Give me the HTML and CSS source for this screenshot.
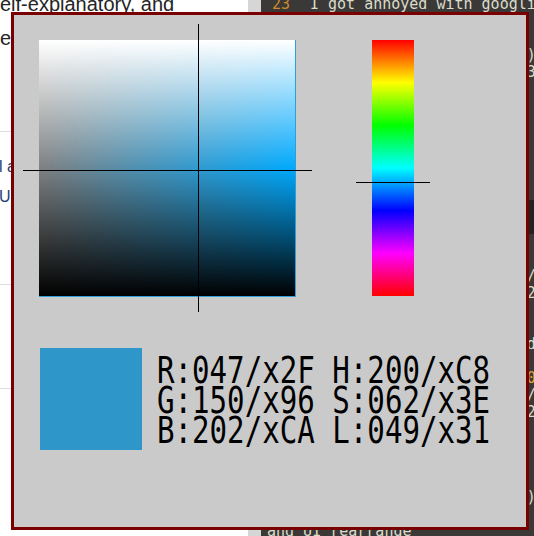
FILE: index.html
```html
<!DOCTYPE html>
<html>
<head>
<meta charset="utf-8">
<link rel="stylesheet" href="styles.css">
</head>
<body>
<div class="page">
  <div class="left-pane">
    <p class="intro">elf-explanatory, and<br>easy to use.</p>
    <div class="rule rule-a"></div>
    <div class="links">
      <div>l and theme</div>
      <div>UI tweaks</div>
    </div>
    <div class="rule rule-b"></div>
    <div class="rule rule-c"></div>
  </div>
  <div class="scroll"></div>
  <div class="editor">
    <div class="ln"><span class="num">23</span><span>I got annoyed with googling for colour codes</span></div>
    <div class="ln"><span class="num"></span><span>so...</span></div>
    <div class="ln"><span class="num"></span><span>TODO:</span></div>
    <div class="ln"><span class="num"></span><span>and made this (pure SDL2) thing</span></div>
    <div class="ln"><span class="num"></span><span>- [x] RGB/HSL readouts v3</span></div>
    <div class="ln"><span class="num"></span><span></span></div>
    <div class="ln"><span class="num"></span><span></span></div>
    <div class="ln"><span class="num"></span><span></span></div>
    <div class="ln"><span class="num"></span><span></span></div>
    <div class="ln"><span class="num"></span><span></span></div>
    <div class="ln"><span class="num"></span><span></span></div>
    <div class="ln"><span class="num"></span><span></span></div>
    <div class="ln hl"><span class="num"></span><span></span></div>
    <div class="ln hl"><span class="num"></span><span></span></div>
    <div class="ln"><span class="num"></span><span></span></div>
    <div class="ln"><span class="num"></span><span></span></div>
    <div class="ln"><span class="num"></span><span>- [ ] copy value as hex / rgb</span></div>
    <div class="ln"><span class="num"></span><span>- [ ] palette file (v1/v2)</span></div>
    <div class="ln"><span class="num"></span><span></span></div>
    <div class="ln"><span class="num"></span><span></span></div>
    <div class="ln"><span class="num"></span><span>- [ ] keep windows pinned</span></div>
    <div class="ln"><span class="num"></span><span></span></div>
    <div class="ln"><span class="num"></span><span>- [ ] default hue value <span class="lit">0</span></span></div>
    <div class="ln"><span class="num"></span><span>- [ ] pick from display / X11</span></div>
    <div class="ln"><span class="num"></span><span>- [ ] also test with SDL2</span></div>
    <div class="ln"><span class="num"></span><span></span></div>
    <div class="ln"><span class="num"></span><span></span></div>
    <div class="ln"><span class="num"></span><span></span></div>
    <div class="ln"><span class="num"></span><span></span></div>
    <div class="ln"><span class="num"></span><span>- [ ] few deps (only SDL)</span></div>
    <div class="ln"><span class="num"></span><span></span></div>
    <div class="ln wrap">and UI rearrange</div>
  </div>
</div>

<div class="dialog">
  <div class="top-row">
    <div class="sv">
      <div class="sv-light"></div>
      <div class="cross-v"></div>
      <div class="cross-h"></div>
    </div>
    <div class="hue">
      <div class="hue-mark"></div>
    </div>
  </div>
  <div class="bottom-row">
    <div class="swatch"></div>
    <div class="readout">
      <div class="row">R:047/x2F H:200/xC8</div>
      <div class="row">G:150/x96 S:062/x3E</div>
      <div class="row">B:202/xCA L:049/x31</div>
    </div>
  </div>
</div>
</body>
</html>
```

FILE: styles.css
```css
html, body {
  margin: 0;
  padding: 0;
}
body {
  width: 534px;
  height: 536px;
  overflow: hidden;
  position: relative;
  background: #ffffff;
}
.page {
  display: flex;
  height: 536px;
  overflow: hidden;
}
.left-pane {
  width: 248px;
  background: #ffffff;
  font-family: "Liberation Sans", Arial, sans-serif;
  color: #242424;
}
.intro {
  margin: -13px 0 0 0;
  font-size: 20px;
  line-height: 34px;
  white-space: nowrap;
}
.rule {
  height: 1px;
  background: #dedede;
}
.rule-a { margin-top: 76px; }
.links {
  margin: 20px 0 0 -1px;
  font-size: 16px;
  line-height: 30px;
  color: #1c3f72;
  white-space: nowrap;
}
.rule-b { margin-top: 72px; }
.rule-c { margin-top: 103px; }
.scroll {
  width: 13px;
  background: #d6d6d6;
}
.editor {
  flex: 1;
  background: #3a3937;
  padding: 0 0 0 11px;
  font-family: "DejaVu Sans Mono", monospace;
  font-size: 15px;
  color: #dcdccc;
  overflow: hidden;
}
.ln {
  height: 17px;
  line-height: 17px;
  display: flex;
  white-space: pre;
}
.ln:first-child {
  margin-top: -4px;
}
.num {
  width: 38px;
  flex: none;
  color: #d0892a;
}
.hl {
  background: #232323;
  margin-left: -11px;
  padding-left: 11px;
}
.lit {
  color: #e2a13a;
}
.wrap {
  margin-left: -5px;
}

.dialog {
  position: absolute;
  left: 11px;
  top: 12px;
  width: 518px;
  height: 518px;
  box-sizing: border-box;
  border: 3px solid #7a0000;
  background: #cacaca;
  padding: 25px 0 0 25px;
}
.top-row {
  display: flex;
  align-items: flex-start;
}
.sv {
  position: relative;
  width: 256px;
  height: 256px;
  border-right: 1px solid #2f9fd8;
  border-bottom: 1px solid #2f9fd8;
  background: linear-gradient(to right, #808080, hsl(200, 100%, 50%));
}
.sv-light {
  position: absolute;
  inset: 0;
  background: linear-gradient(to bottom, #ffffff 0%, rgba(255,255,255,0) 50%, rgba(0,0,0,0) 50%, #000000 100%);
}
.cross-v {
  position: absolute;
  left: 159px;
  top: -16px;
  width: 1px;
  height: 288px;
  background: #000;
}
.cross-h {
  position: absolute;
  top: 130px;
  left: -16px;
  height: 1px;
  width: 289px;
  background: #000;
}
.hue {
  position: relative;
  margin-left: 76px;
  width: 42px;
  height: 256px;
  background: linear-gradient(to bottom, #ff0000 0%, #ffff00 16.667%, #00ff00 33.333%, #00ffff 50%, #0000ff 66.667%, #ff00ff 83.333%, #ff0000 100%);
}
.hue-mark {
  position: absolute;
  left: -16px;
  top: 142px;
  width: 74px;
  height: 1px;
  background: #000;
}
.bottom-row {
  display: flex;
  align-items: flex-start;
  margin-top: 51px;
  margin-left: 1px;
}
.swatch {
  width: 102px;
  height: 102px;
  flex: none;
  background: #2f96ca;
}
.readout {
  flex: none;
  margin-left: 15px;
  margin-top: 8px;
  font-family: "DejaVu Sans Mono", monospace;
  font-size: 37px;
  line-height: 30px;
  color: #000;
  transform: scaleX(0.787);
  transform-origin: left top;
}
.row {
  white-space: pre;
  height: 30px;
}
```
